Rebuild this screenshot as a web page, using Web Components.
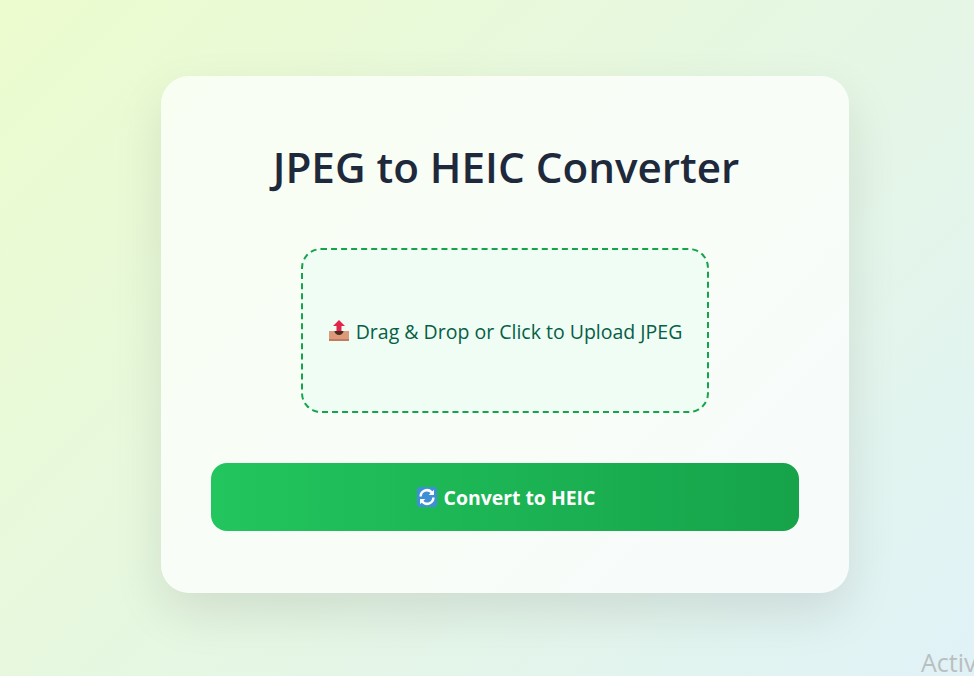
<!DOCTYPE html>
<html><head><meta charset="utf-8"><style>
html,body{margin:0;height:100%;overflow:hidden}
body{font-family:"Open Sans","Noto Sans",sans-serif}
</style></head><body>
<converter-page>
<converter-card>
<span slot="title">JPEG to HEIC Converter</span>
<drop-zone>Drag &amp; Drop or Click to Upload JPEG</drop-zone>
<convert-button>Convert to HEIC</convert-button>
</converter-card>
</converter-page>
<script>
function def(name,html){customElements.define(name,class extends HTMLElement{constructor(){super();this.attachShadow({mode:'open'}).innerHTML=html}})}
def('converter-page',`<style>:host{display:block;box-sizing:border-box;width:974px;height:676px;padding:76px 0 0 161px;position:relative;overflow:hidden;background:linear-gradient(135deg,#ecfcce 0%,#e0f2f7 100%)}
.wm{position:absolute;left:921px;top:645px;font:25px "Open Sans",sans-serif;color:#b9bfc0;white-space:nowrap}</style><slot></slot><div class="wm">Activ</div>`);
def('converter-card',`<style>:host{display:flex;flex-direction:column;align-items:center;box-sizing:border-box;width:688px;height:517px;padding:61px 50px;border-radius:28px;background:rgba(255,255,255,.72);box-shadow:0 20px 50px rgba(0,0,0,.1);color:#1e293b}
h1{margin:0 0 51px 2px;font-size:42.200px;line-height:60px;font-weight:600;white-space:nowrap}</style><h1><slot name="title"></slot></h1><slot></slot>`);
def('drop-zone',`<style>:host{display:flex;align-items:center;justify-content:center;gap:6px;box-sizing:border-box;width:408px;height:165px;margin-bottom:50px;border:2px dashed #16a34a;border-radius:20px;background:#effdf4;color:#065f46;font-size:19.500px;white-space:nowrap}svg{flex:none}span{padding-top:2px}</style>
<svg width="22" height="22" viewBox="0 0 22 22"><path d="M1 11h20v9a1 1 0 0 1-1 1H2a1 1 0 0 1-1-1z" fill="#dd9a7b"/><rect x="1" y="19" width="20" height="2" fill="#c17c60"/><path d="M6.500 11a4.500 4 0 0 0 9 0z" fill="#4a2c20"/><path d="M11 0l6 6H13.500v5h-5V6H5z" fill="#e0264a"/></svg><span><slot></slot></span>`);
def('convert-button',`<style>:host{display:flex;align-items:center;justify-content:center;gap:7px;box-sizing:border-box;width:588px;height:68px;padding-left:2px;border-radius:16px;background:linear-gradient(90deg,#22c55e,#16a34a);color:#fff;font-size:19.400px;font-weight:700;white-space:nowrap}svg{flex:none}</style>
<svg width="20" height="20" viewBox="0 0 21 21"><rect width="21" height="21" rx="3" fill="#3f8fd6"/><g fill="none" stroke="#fff" stroke-width="2.600"><path d="M3.800 10a6.700 6.700 0 0 1 11.400-4.700l1.300 1.300"/><path d="M17.200 11a6.700 6.700 0 0 1-11.400 4.700L4.500 14.400"/></g><path d="M17.800 3v5.500H12.300z" fill="#fff"/><path d="M3.200 18v-5.500H8.700z" fill="#fff"/></svg><span><slot></slot></span>`);
</script></body></html>
